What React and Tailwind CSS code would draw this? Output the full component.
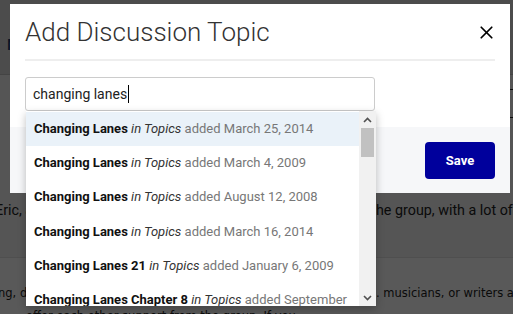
import { X } from 'lucide-react'

const results = [
  { name: 'Changing Lanes', date: 'March 25, 2014' },
  { name: 'Changing Lanes', date: 'March 4, 2009' },
  { name: 'Changing Lanes', date: 'August 12, 2008' },
  { name: 'Changing Lanes', date: 'March 16, 2014' },
  { name: 'Changing Lanes 21', date: 'January 6, 2009' },
  { name: 'Changing Lanes Chapter 8', date: 'September 15, 2010' },
]

function PageBehind() {
  return (
    <div className="w-[513px] h-[314px] overflow-hidden bg-white text-[#333]" style={{ fontFamily: 'Roboto, sans-serif' }}>
      {/* top bar */}
      <div className="h-[75px] bg-[#d9d9d9] border-b border-[#c4c4c4] pl-[7px] pt-[34px] text-[15px] font-medium text-[#1a3a6a]">
        Members
      </div>

      {/* group intro */}
      <div className="h-[183px] bg-[#f3f3f3] border-b border-[#e2e2e2] pt-[14px]">
        <div className="flex justify-end">
          <div className="w-[120px] h-[29px] border border-[#222] -mr-[20px]" />
        </div>
        <div className="mt-[81px] flex whitespace-nowrap text-[14.3px] leading-[22px] text-[#222]">
          <div className="w-[376px] shrink-0 overflow-hidden">
            <span className="inline-block -ml-[5px]">Eric, a long-standing member and organiser of t</span>
          </div>
          <div>he group, with a lot of</div>
        </div>
      </div>

      {/* description */}
      <div className="pt-[24px] text-[11.5px] leading-[23px] text-[#222] whitespace-nowrap" style={{ fontFamily: '"DejaVu Sans", Verdana, sans-serif' }}>
        <div className="flex">
          <div className="w-[376px] shrink-0 overflow-hidden">
            <span className="inline-block -ml-[2px]">ng, drawing, painting and all other creative work</span>
          </div>
          <div>. musicians, or writers are</div>
        </div>
        <div className="pl-[26px]">offer each other support from the group. If you</div>
      </div>
    </div>
  )
}

function ScrollArrow({ up }) {
  return (
    <div className="h-[17px] flex items-center justify-center">
      <svg width="9" height="6" viewBox="0 0 9 6" fill="none">
        <path d={up ? 'M1 5 L4.5 1.5 L8 5' : 'M1 1 L4.5 4.5 L8 1'} stroke="#505050" strokeWidth="1.6" />
      </svg>
    </div>
  )
}

export default function App() {
  return (
    <div className="relative w-[513px] h-[314px] overflow-hidden">
      <PageBehind />

      {/* backdrop */}
      <div className="absolute inset-0 bg-black/65" />

      {/* modal */}
      <div className="absolute left-[10px] top-[4px] w-[500px] bg-white" style={{ fontFamily: 'Roboto, sans-serif' }}>
        <div className="px-[15px] pt-[11px]">
          <div className="flex items-center justify-between pb-[10px] border-b-2 border-[#eeeeee]">
            <h2 className="text-[26px] leading-[34px] font-light text-[#333]">Add Discussion Topic</h2>
            <X className="w-[21px] h-[21px] text-black -mr-[2px]" strokeWidth={2} />
          </div>
        </div>

        <div className="px-[15px] py-[16px]">
          <div className="relative w-[350px]">
            <div className="h-[34px] border border-[#cccccc] rounded-[3px] flex items-center px-[7px] text-[14px] text-[#222]">
              changing lanes
              <span className="inline-block w-px h-[18px] bg-black ml-px" />
            </div>

            {/* autocomplete results */}
            <div className="absolute left-[1px] top-full w-[350px] h-[195px] bg-white flex shadow-[0_3px_8px_rgba(0,0,0,0.25)] z-10">
              <ul className="flex-1 overflow-hidden pt-px">
                {results.map((r, i) => (
                  <li
                    key={i}
                    className={`px-[8px] py-[8px] text-[13px] leading-[18.2px] ${i === 0 ? 'bg-[#eaf2f9]' : ''}`}
                  >
                    <span className="font-bold text-[#111]">{r.name}</span>{' '}
                    <span className="italic text-[#333]">in Topics</span>{' '}
                    <span className="text-[#777]">added {r.date}</span>
                  </li>
                ))}
              </ul>
              <div className="w-[17px] bg-[#f1f1f1] flex flex-col">
                <ScrollArrow up />
                <div className="h-[29px] mx-[2px] bg-[#c1c1c1]" />
                <div className="flex-1" />
                <ScrollArrow />
              </div>
            </div>
          </div>
        </div>

        <div className="bg-[#f6f7f9] flex justify-end px-[15px] pt-[15px] pb-[14px]">
          <button className="w-[70px] h-[37px] rounded-[4px] bg-[#00009c] text-white text-[13px] font-bold">Save</button>
        </div>
      </div>
    </div>
  )
}
